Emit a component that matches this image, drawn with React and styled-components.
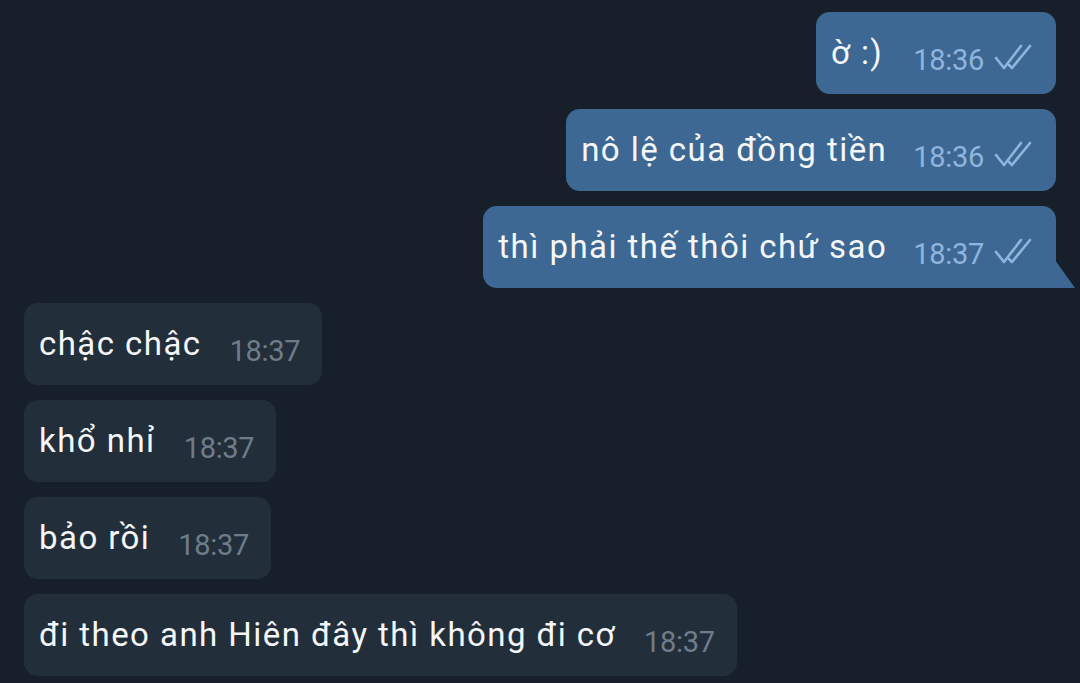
import React from "react";
import styled, { createGlobalStyle } from "styled-components";

const Global = createGlobalStyle`
  html, body { margin: 0; padding: 0; background: #17202a; }
  body { font-family: Roboto, "Noto Sans", sans-serif; overflow: hidden; }
`;

const Chat = styled.div`
  width: 1080px;
  height: 683px;
  box-sizing: border-box;
  padding: 12px 24px 0;
  display: flex;
  flex-direction: column;
  gap: 15px;
  background: #17202a;
`;

const Row = styled.div`
  display: flex;
  justify-content: ${(p) => (p.$out ? "flex-end" : "flex-start")};
`;

const Bubble = styled.div`
  position: relative;
  display: flex;
  align-items: flex-end;
  height: 82px;
  box-sizing: border-box;
  padding: 0 ${(p) => (p.$out ? "24px" : "22px")} 17px 15px;
  border-radius: 14px;
  background: ${(p) => (p.$out ? "#3d6893" : "#232e3b")};
  ${(p) =>
    p.$tail &&
    `
    border-bottom-right-radius: 0;
    &::after {
      content: "";
      position: absolute;
      right: -19px;
      bottom: 0;
      width: 20px;
      height: 28px;
      background: #3d6893;
      clip-path: polygon(0 0, 100% 100%, 0 100%);
    }
  `}
`;

const Text = styled.span`
  font-size: 33px;
  letter-spacing: 1.45px;
  line-height: normal;
  color: #f4f6f8;
  margin-bottom: 5px;
  white-space: nowrap;
`;

const Meta = styled.span`
  display: flex;
  align-items: flex-end;
  margin-left: ${(p) => (p.$wide ? "30px" : p.$out ? "26px" : "28px")};
  gap: 10px;
`;

const Time = styled.span`
  font-size: 29px;
  line-height: normal;
  color: ${(p) => (p.$out ? "#8fb5dc" : "#6f7d8a")};
  letter-spacing: -0.3px;
`;

const Checks = styled.svg`
  width: 38px;
  height: 26px;
  margin-bottom: 7px;
  flex: none;
`;

function DoubleCheck() {
  return (
    <Checks viewBox="0 0 38 26" fill="none" stroke="#8fb5dc" strokeWidth="2.6" strokeLinecap="round" strokeLinejoin="round">
      <path d="M2 14 L10 24 L27 2" />
      <path d="M15 21 L18 24 L36 2" />
    </Checks>
  );
}

const messages = [
  { out: true, text: "ờ :)", time: "18:36", wide: true },
  { out: true, text: "nô lệ của đồng tiền", time: "18:36" },
  { out: true, text: "thì phải thế thôi chứ sao", time: "18:37", tail: true },
  { out: false, text: "chậc chậc", time: "18:37" },
  { out: false, text: "khổ nhỉ", time: "18:37" },
  { out: false, text: "bảo rồi", time: "18:37" },
  { out: false, text: "đi theo anh Hiên đây thì không đi cơ", time: "18:37" },
];

export default function App() {
  return (
    <>
      <Global />
      <Chat>
        {messages.map((m, i) => (
          <Row key={i} $out={m.out}>
            <Bubble $out={m.out} $tail={m.tail}>
              <Text>{m.text}</Text>
              <Meta $wide={m.wide} $out={m.out}>
                <Time $out={m.out}>{m.time}</Time>
                {m.out && <DoubleCheck />}
              </Meta>
            </Bubble>
          </Row>
        ))}
      </Chat>
    </>
  );
}
